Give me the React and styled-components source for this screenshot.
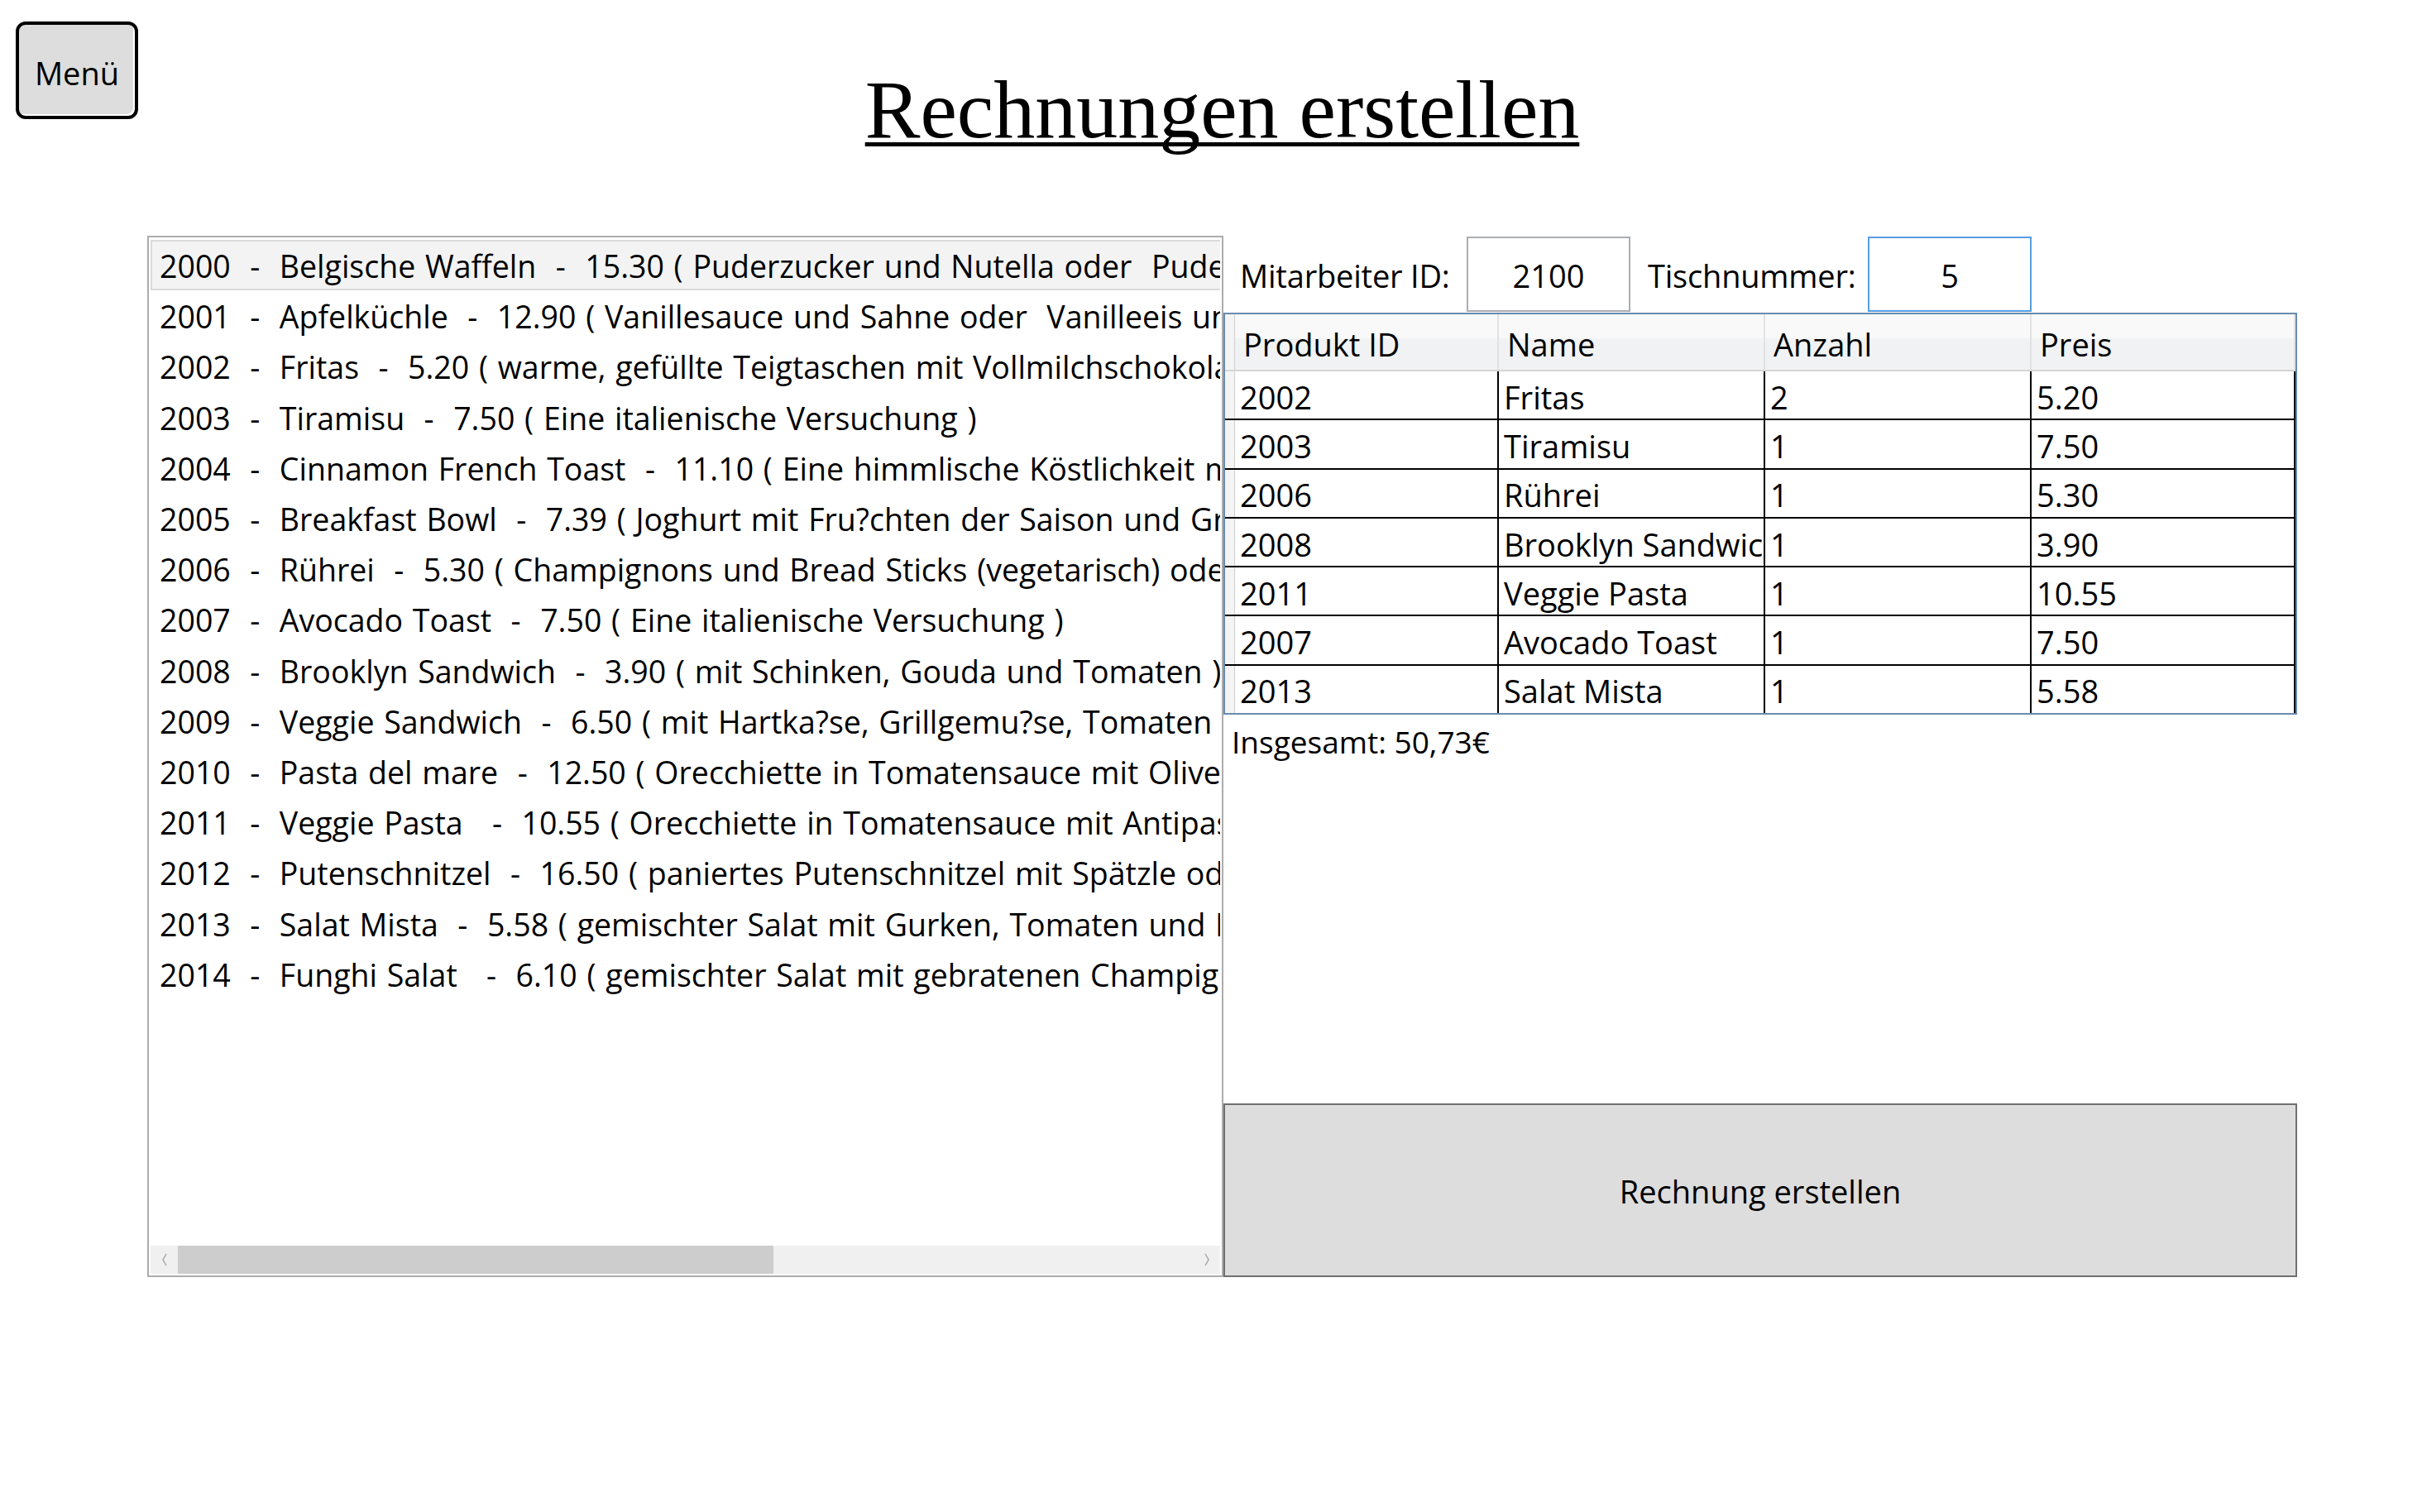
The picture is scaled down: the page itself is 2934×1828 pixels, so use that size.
import React from 'react';
import styled, { createGlobalStyle } from 'styled-components';

const GlobalStyle = createGlobalStyle`
  html, body {
    margin: 0;
    padding: 0;
    background: #ffffff;
  }
  body {
    font-family: "Open Sans", "Noto Sans", sans-serif;
    color: #000;
  }
`;

const Page = styled.div`
  width: 2934px;
  height: 1828px;
  padding-top: 26px;
  box-sizing: border-box;
`;

const Header = styled.header`
  display: grid;
  grid-template-columns: 178px 2599px;
  align-items: start;
  height: 259px;
`;

const MenuButton = styled.button`
  margin-left: 19px;
  width: 148px;
  height: 118px;
  padding: 5px 0 0;
  border: 4px solid #000;
  border-radius: 12px;
  background: #dddddd;
  box-shadow: inset -2px -2px 0 #fff;
  font-family: "Open Sans", sans-serif;
  font-size: 38px;
  color: #000;
`;

const Title = styled.h1`
  justify-self: center;
  margin: 57px 0 0;
  font-family: "Liberation Serif", serif;
  font-weight: 400;
  font-size: 100px;
  line-height: 100px;
  text-decoration: underline;
  text-decoration-thickness: 5px;
  text-underline-offset: 6px;
  text-decoration-skip-ink: none;
`;

const Main = styled.main`
  display: grid;
  grid-template-columns: 1301px 1298px;
  margin-left: 178px;
  height: 1259px;
`;

const ListBox = styled.div`
  display: flex;
  flex-direction: column;
  min-width: 0;
  padding: 3px 2px 2px;
  border: 2px solid #acacac;
  box-sizing: border-box;
`;

const Items = styled.div`
  flex: 1;
  overflow: hidden;
`;

const Item = styled.div`
  display: flex;
  align-items: center;
  width: max-content;
  min-width: 100%;
  height: 61.2px;
  padding: 2px 0 0 9px;
  box-sizing: border-box;
  border: 2px solid ${({ selected }) => (selected ? '#dadada' : 'transparent')};
  background: ${({ selected }) => (selected ? '#f3f3f3' : 'transparent')};
  font-size: 37.5px;
  word-spacing: 2px;
  white-space: pre;
`;

const HScroll = styled.div`
  display: flex;
  flex-shrink: 0;
  height: 34px;
  background: #f0f0f0;
`;

const ScrollArrow = styled.div`
  display: flex;
  align-items: center;
  justify-content: center;
  width: 33px;
`;

const ScrollTrack = styled.div`
  flex: 1;
  display: flex;
`;

const ScrollThumb = styled.div`
  width: 58.7%;
  background: #cdcdcd;
`;

const RightPanel = styled.section`
  display: flex;
  flex-direction: column;
  min-width: 0;
`;

const FormRow = styled.div`
  display: flex;
  align-items: center;
  height: 93px;
  flex-shrink: 0;
`;

const FieldLabel = styled.label`
  width: ${({ $w }) => $w}px;
  padding: 3px 0 0 ${({ $pl }) => $pl}px;
  box-sizing: border-box;
  font-size: 38px;
  letter-spacing: -0.2px;
`;

const TextBox = styled.div`
  display: flex;
  align-items: center;
  justify-content: center;
  align-self: flex-start;
  width: 198px;
  height: 91px;
  margin-top: 1px;
  padding-top: 3px;
  box-sizing: border-box;
  border: 2px solid ${({ $focused }) => ($focused ? '#569de5' : '#abadb3')};
  font-size: 38px;
`;

const DataGrid = styled.div`
  height: 486px;
  flex-shrink: 0;
  border: 2px solid #688caf;
  box-sizing: border-box;
  overflow: hidden;
`;

const GridRow = styled.div`
  display: grid;
  grid-template-columns: 12px 319px 322px 322px 319px;
  height: ${({ $head }) => ($head ? 69 : 59.3)}px;
  box-sizing: border-box;
  border-bottom: 2px solid ${({ $head }) => ($head ? '#d5d5d5' : '#000')};
  background: ${({ $head }) =>
    $head ? 'linear-gradient(#f9f9f9 0 44%, #f1f2f4 44%)' : '#fff'};
`;

const RowHeader = styled.div`
  background: #f4f4f4;
  border-right: 1px solid #cfcfcf;
`;

const Cell = styled.div`
  display: flex;
  align-items: center;
  padding: 4px 0 0 ${({ $head }) => ($head ? 10 : 6)}px;
  border-right: 2px solid ${({ $head }) => ($head ? '#e2e2e2' : '#000')};
  overflow: hidden;
  white-space: nowrap;
  font-size: 38px;
`;

const Total = styled.div`
  margin: 7px 0 0 10px;
  font-size: 37px;
`;

const CreateButton = styled.button`
  margin-top: auto;
  height: 210px;
  padding-top: 3px;
  border: 2px solid #707070;
  background: #dddddd;
  font-family: "Open Sans", sans-serif;
  font-size: 38px;
  color: #000;
`;

const menuItems = [
  '2000  -  Belgische Waffeln  -  15.30 ( Puderzucker und Nutella oder  Puderzucker und Erdbeeren )',
  '2001  -  Apfelküchle  -  12.90 ( Vanillesauce und Sahne oder  Vanilleeis und Zimt )',
  '2002  -  Fritas  -  5.20 ( warme, gefüllte Teigtaschen mit Vollmilchschokolade )',
  '2003  -  Tiramisu  -  7.50 ( Eine italienische Versuchung )',
  '2004  -  Cinnamon French Toast  -  11.10 ( Eine himmlische Köstlichkeit mit Zimt )',
  '2005  -  Breakfast Bowl  -  7.39 ( Joghurt mit Fru?chten der Saison und Granola )',
  '2006  -  Rührei  -  5.30 ( Champignons und Bread Sticks (vegetarisch) oder Speck )',
  '2007  -  Avocado Toast  -  7.50 ( Eine italienische Versuchung )',
  '2008  -  Brooklyn Sandwich  -  3.90 ( mit Schinken, Gouda und Tomaten )',
  '2009  -  Veggie Sandwich  -  6.50 ( mit Hartka?se, Grillgemu?se, Tomaten und Rucola )',
  '2010  -  Pasta del mare  -  12.50 ( Orecchiette in Tomatensauce mit Oliven und Garnelen )',
  '2011  -  Veggie Pasta   -  10.55 ( Orecchiette in Tomatensauce mit Antipasti )',
  '2012  -  Putenschnitzel  -  16.50 ( paniertes Putenschnitzel mit Spätzle oder Pommes )',
  '2013  -  Salat Mista  -  5.58 ( gemischter Salat mit Gurken, Tomaten und Mais )',
  '2014  -  Funghi Salat   -  6.10 ( gemischter Salat mit gebratenen Champignons )',
];

const orderRows = [
  ['2002', 'Fritas', '2', '5.20'],
  ['2003', 'Tiramisu', '1', '7.50'],
  ['2006', 'Rührei', '1', '5.30'],
  ['2008', 'Brooklyn Sandwich', '1', '3.90'],
  ['2011', 'Veggie Pasta', '1', '10.55'],
  ['2007', 'Avocado Toast', '1', '7.50'],
  ['2013', 'Salat Mista', '1', '5.58'],
];

const Chevron = ({ dir }) => (
  <svg width="10" height="18" viewBox="0 0 10 18">
    <polyline
      points={dir === 'left' ? '7,2 3,9 7,16' : '3,2 7,9 3,16'}
      fill="none"
      stroke="#a6a6a6"
      strokeWidth="1.5"
    />
  </svg>
);

const App = () => {
  return (
    <Page>
      <GlobalStyle />
      <Header>
        <MenuButton>Menü</MenuButton>
        <Title>Rechnungen erstellen</Title>
      </Header>
      <Main>
        <ListBox>
          <Items>
            {menuItems.map((text, index) => (
              <Item key={index} selected={index === 0}>
                {text}
              </Item>
            ))}
          </Items>
          <HScroll>
            <ScrollArrow>
              <Chevron dir="left" />
            </ScrollArrow>
            <ScrollTrack>
              <ScrollThumb />
            </ScrollTrack>
            <ScrollArrow>
              <Chevron dir="right" />
            </ScrollArrow>
          </HScroll>
        </ListBox>

        <RightPanel>
          <FormRow>
            <FieldLabel $w={294} $pl={20}>Mitarbeiter ID:</FieldLabel>
            <TextBox>2100</TextBox>
            <FieldLabel $w={287} $pl={21}>Tischnummer:</FieldLabel>
            <TextBox $focused>5</TextBox>
          </FormRow>

          <DataGrid>
            <GridRow $head>
              <RowHeader />
              <Cell $head>Produkt ID</Cell>
              <Cell $head>Name</Cell>
              <Cell $head>Anzahl</Cell>
              <Cell $head>Preis</Cell>
            </GridRow>
            {orderRows.map((row, index) => (
              <GridRow key={index}>
                <RowHeader />
                {row.map((value, i) => (
                  <Cell key={i}>{value}</Cell>
                ))}
              </GridRow>
            ))}
          </DataGrid>

          <Total>Insgesamt: 50,73€</Total>

          <CreateButton>Rechnung erstellen</CreateButton>
        </RightPanel>
      </Main>
    </Page>
  );
};

export default App;
